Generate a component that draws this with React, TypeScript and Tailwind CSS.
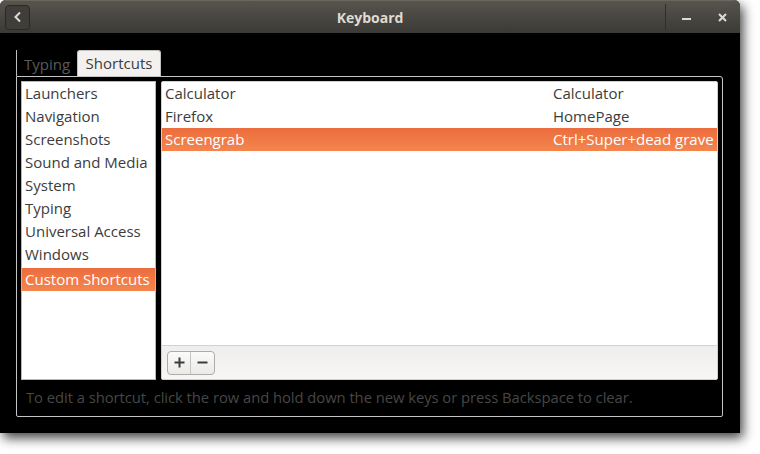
import React from 'react';

const categories = [
  'Launchers',
  'Navigation',
  'Screenshots',
  'Sound and Media',
  'System',
  'Typing',
  'Universal Access',
  'Windows',
  'Custom Shortcuts',
];

const shortcuts = [
  { name: 'Calculator', keys: 'Calculator' },
  { name: 'Firefox', keys: 'HomePage' },
  { name: 'Screengrab', keys: 'Ctrl+Super+dead grave' },
];

const App: React.FC = () => {
  const selectedCategory = 'Custom Shortcuts';
  const selectedRow = 2;

  return (
    <div className="w-[760px] h-[454px] bg-white overflow-hidden font-['Open_Sans',sans-serif]">
      <div className="w-[740px] h-[433px] bg-black rounded-t-[6px] flex flex-col shadow-[3px_5px_12px_rgba(0,0,0,0.75)]">
        {/* barra de título */}
        <div className="h-[33px] shrink-0 rounded-t-[6px] bg-gradient-to-b from-[#57544d] to-[#3b3a36] border-t border-[#6a675f] flex items-center relative">
          <button className="ml-[5px] w-[25px] h-[25px] rounded-[4px] border border-[#2a2926] bg-[#3f3e3a] flex items-center justify-center">
            <svg width="10" height="12" viewBox="0 0 10 12">
              <path d="M7 1.5 L2.5 6 L7 10.5" fill="none" stroke="#dfdbd2" strokeWidth="2" />
            </svg>
          </button>
          <div className="absolute left-0 right-0 text-center text-[14px] font-bold text-[#dfdbd2] pointer-events-none">
            Keyboard
          </div>
          <div className="ml-auto flex items-center h-full">
            <div className="w-px h-[26px] bg-[#2f2e2b] mr-[10px]" />
            <div className="w-[20px] flex justify-center">
              <div className="w-[9px] h-[2px] bg-[#dfdbd2] mt-[4px]" />
            </div>
            <div className="w-[20px] flex justify-center ml-[16px] mr-[8px]">
              <svg width="9" height="9" viewBox="0 0 9 9">
                <path d="M1 1 L8 8 M8 1 L1 8" stroke="#dfdbd2" strokeWidth="2" />
              </svg>
            </div>
          </div>
        </div>

        {/* cuerpo */}
        <div className="flex-1 flex flex-col pl-[16px] pr-[17px] pt-[17px] pb-[16px]">
          <div className="flex h-[26px] items-end">
            <div className="w-px h-[26px] bg-[#bdbdbd]" />
            <div className="w-[60px] h-[24px] flex items-center justify-center text-[15px] text-[#5a5a5a]">
              Typing
            </div>
            <div className="w-[84px] h-[26px] bg-[#f2f1f0] border border-b-0 border-[#c4c2bd] rounded-t-[3px] flex items-center justify-center text-[15px] text-[#3c3c3c]">
              Shortcuts
            </div>
          </div>
          <div className="flex-1 border border-[#c4c4c4] rounded-b-[2px] rounded-tr-[3px] p-[4px] flex flex-col">
            <div className="h-[299px] flex gap-[5px]">
              <div className="w-[135px] bg-white border border-[#b9b9b9] flex flex-col text-[15px] text-[#3c3c3c]">
                {categories.map((c) => (
                  <div
                    key={c}
                    className={
                      c === selectedCategory
                        ? 'h-[23px] mt-[2px] pl-[3px] flex items-center text-white bg-gradient-to-b from-[#ec6d3d] to-[#f4854f]'
                        : 'h-[23px] pl-[3px] flex items-center'
                    }
                  >
                    {c}
                  </div>
                ))}
              </div>
              <div className="flex-1 bg-white border border-[#cfcfcf] rounded-[2px] flex flex-col text-[15px] text-[#3c3c3c]">
                <div className="flex-1">
                  {shortcuts.map((s, i) => (
                    <div
                      key={s.name}
                      className={
                        i === selectedRow
                          ? 'h-[23px] flex items-center text-white bg-gradient-to-b from-[#ec6d3d] to-[#f4854f]'
                          : 'h-[23px] flex items-center'
                      }
                    >
                      <div className="w-[391px] pl-[3px]">{s.name}</div>
                      <div>{s.keys}</div>
                    </div>
                  ))}
                </div>
                <div className="h-[34px] border-t border-[#d4d2ce] bg-gradient-to-b from-[#efeeec] to-[#f7f6f5] flex items-center pl-[5px]">
                  <div className="flex h-[24px] border border-[#aeaca7] rounded-[4px] bg-gradient-to-b from-[#fbfbfa] to-[#ebeae8]">
                    <div className="w-[23px] flex items-center justify-center border-r border-[#c6c4bf]">
                      <svg width="11" height="11" viewBox="0 0 11 11">
                        <path d="M5.5 0.5 V10.5 M0.5 5.5 H10.5" stroke="#3c3c3c" strokeWidth="2" />
                      </svg>
                    </div>
                    <div className="w-[23px] flex items-center justify-center">
                      <svg width="11" height="11" viewBox="0 0 11 11">
                        <path d="M0.5 5.5 H10.5" stroke="#3c3c3c" strokeWidth="2" />
                      </svg>
                    </div>
                  </div>
                </div>
              </div>
            </div>
            <div className="flex-1 flex items-center pl-[5px] pt-[3px] text-[14.8px] tracking-[-0.05px] text-[#474747]">
              To edit a shortcut, click the row and hold down the new keys or press Backspace to clear.
            </div>
          </div>
        </div>
      </div>
    </div>
  );
};

export default App;
